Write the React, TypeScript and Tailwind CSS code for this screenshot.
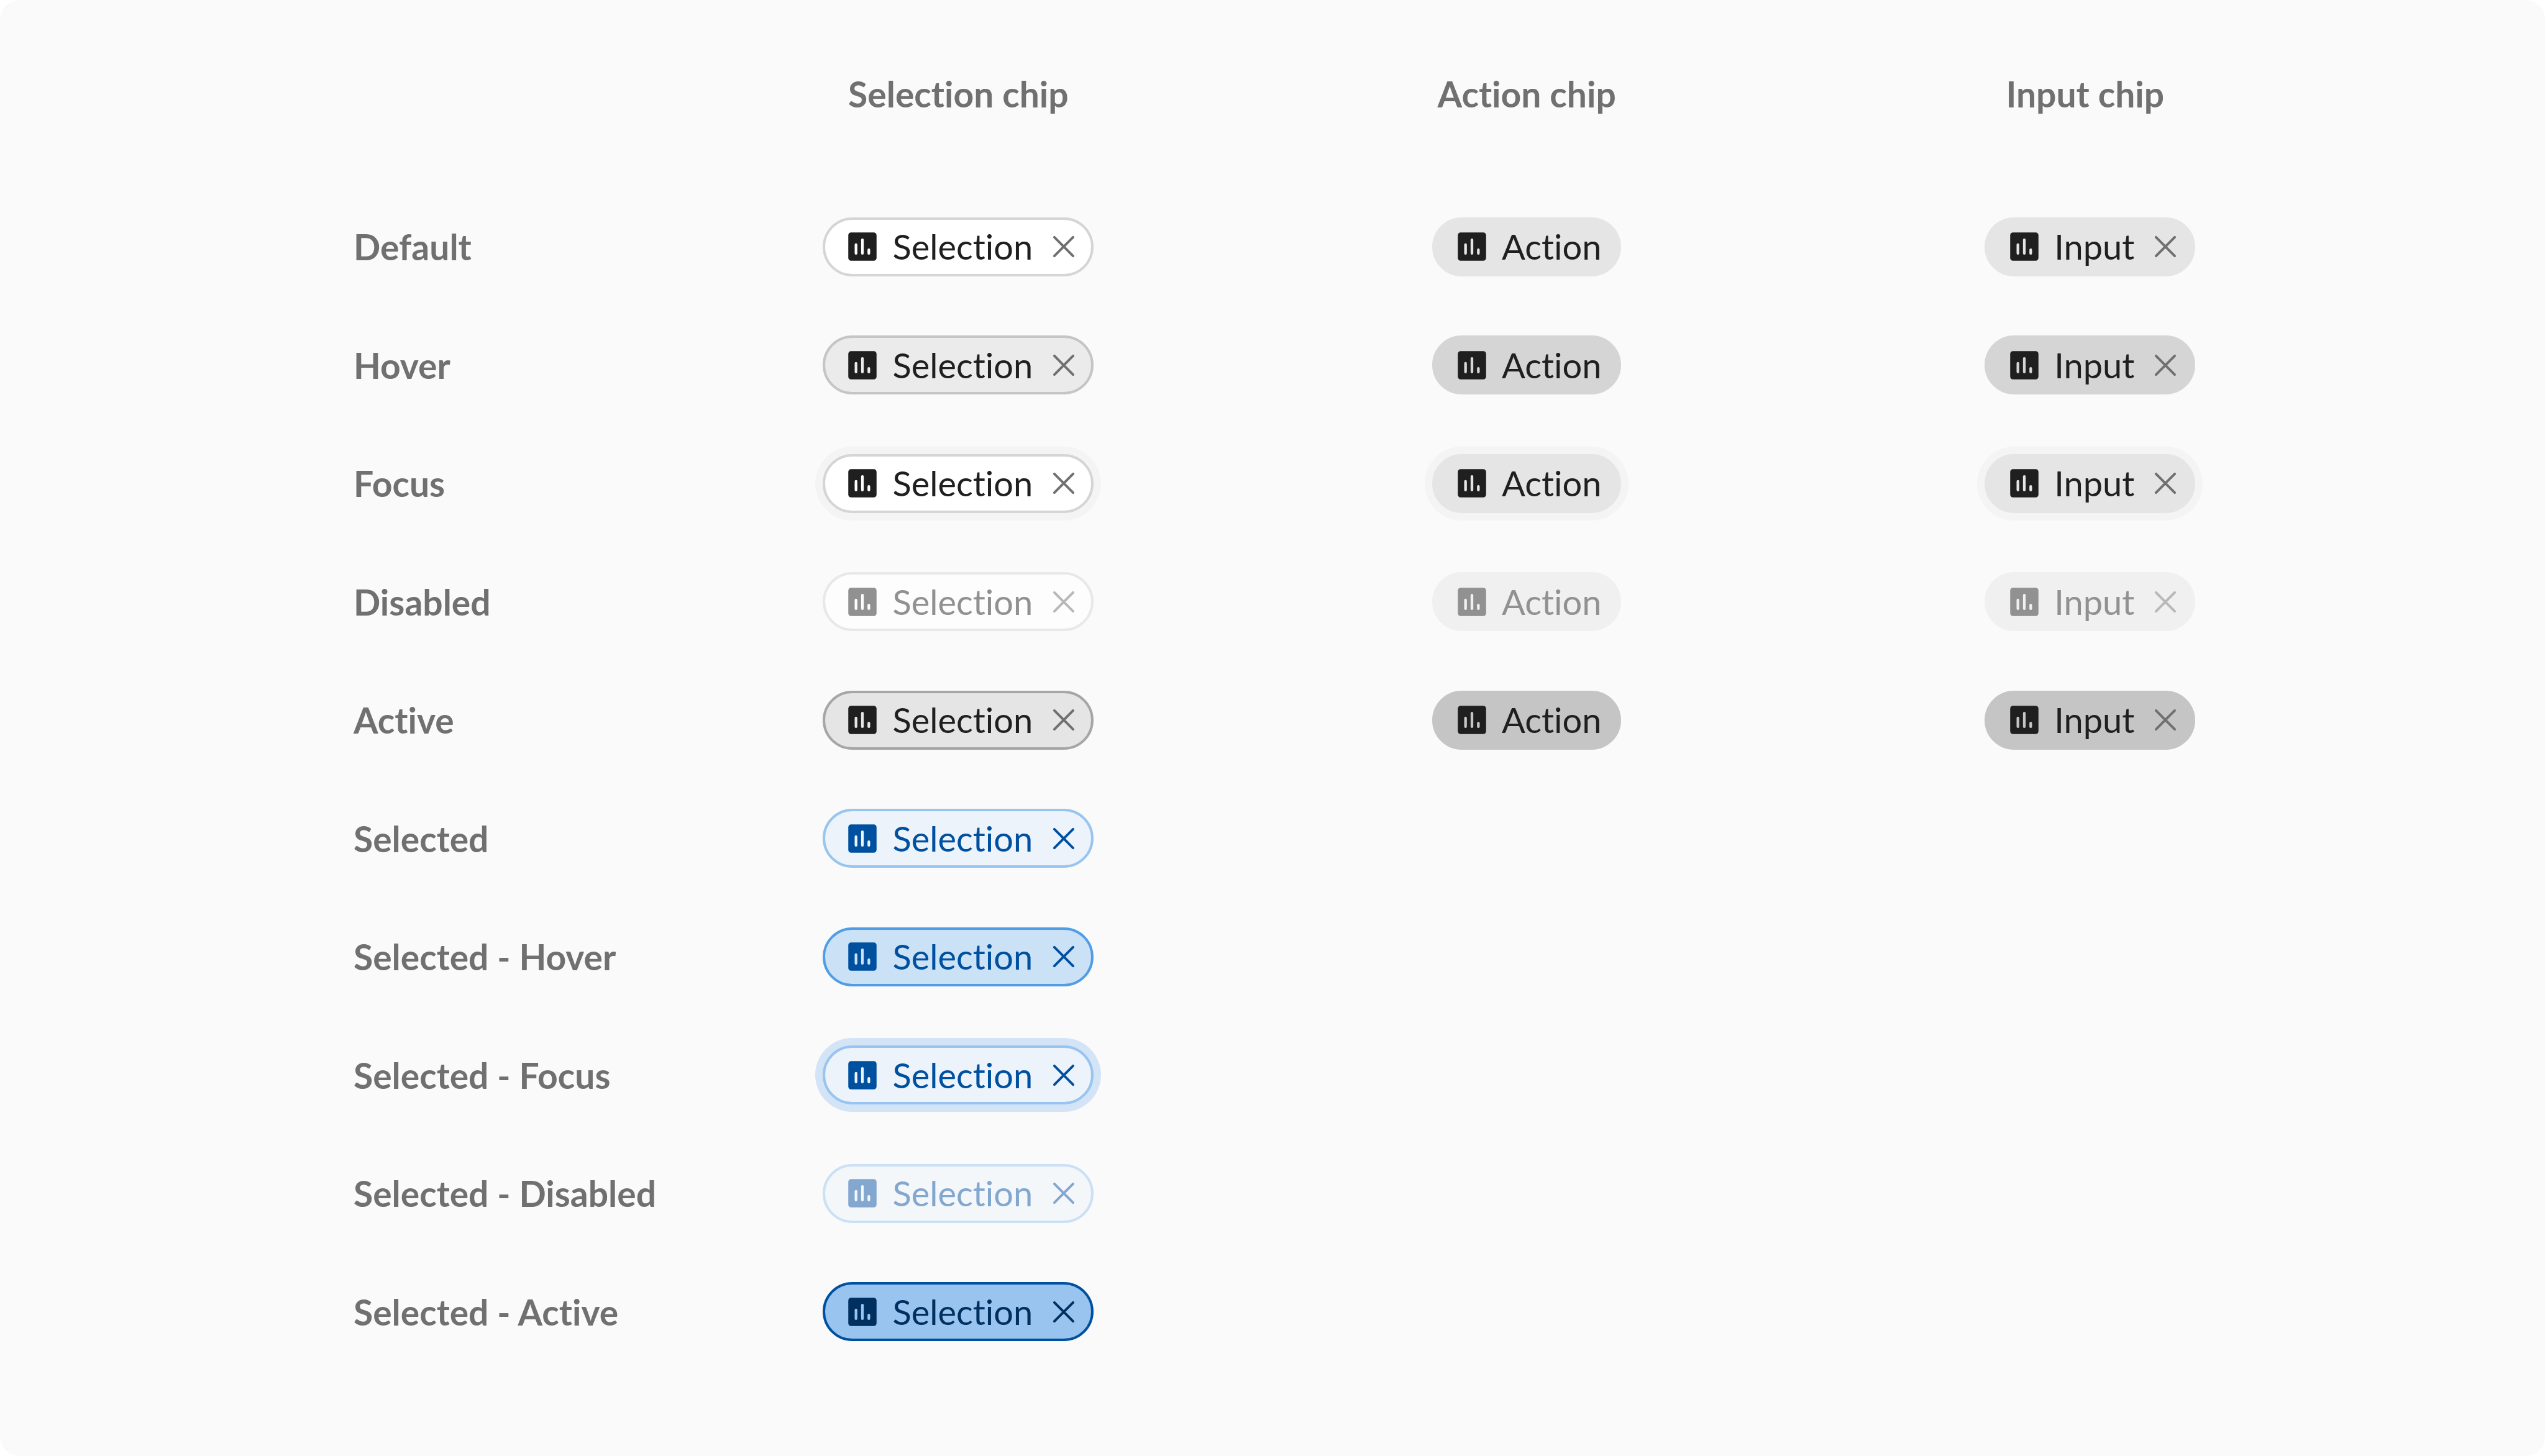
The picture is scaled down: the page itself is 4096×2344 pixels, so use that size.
import React from "react";
import clsx from "clsx";

type Kind = "selection" | "action" | "input";

interface Tone {
  box: string;
  text: string;
  close?: string;
}

interface State {
  label: string;
  disabled?: boolean;
  pressed?: boolean;
  selection: Tone;
  action?: Tone;
  input?: Tone;
}

const INK = "text-[#1f1f1f]";
const GREY = "text-[#707070]";
const GREY_RING = "ring-12 ring-[#f4f4f4]";

const same = (tone: Tone) => ({ action: tone, input: tone });

const states: State[] = [
  {
    label: "Default",
    selection: { box: "bg-white border-[#d5d5d5]", text: INK, close: GREY },
    ...same({ box: "bg-[#e5e5e5] border-[#e5e5e5]", text: INK, close: GREY }),
  },
  {
    label: "Hover",
    selection: { box: "bg-[#ebebeb] border-[#c5c5c5]", text: INK, close: GREY },
    ...same({ box: "bg-[#d5d5d5] border-[#d5d5d5]", text: INK, close: GREY }),
  },
  {
    label: "Focus",
    selection: { box: clsx("bg-white border-[#d5d5d5]", GREY_RING), text: INK, close: GREY },
    ...same({ box: clsx("bg-[#e5e5e5] border-[#e5e5e5]", GREY_RING), text: INK, close: GREY }),
  },
  {
    label: "Disabled",
    disabled: true,
    selection: { box: "bg-[#fdfdfd] border-[#e8e8e8]", text: "text-[#919191]", close: "text-[#b8b8b8]" },
    ...same({ box: "bg-[#f0f0f0] border-[#f0f0f0]", text: "text-[#919191]", close: "text-[#b8b8b8]" }),
  },
  {
    label: "Active",
    selection: { box: "bg-[#e5e5e5] border-[#a6a6a6]", text: INK, close: GREY },
    ...same({ box: "bg-[#c5c5c5] border-[#c5c5c5]", text: INK, close: GREY }),
  },
  {
    label: "Selected",
    pressed: true,
    selection: { box: "bg-[#ecf3fb] border-[#98c4ef]", text: "text-[#0050a0]" },
  },
  {
    label: "Selected - Hover",
    pressed: true,
    selection: { box: "bg-[#cbe1f5] border-[#509de6]", text: "text-[#0050a0]" },
  },
  {
    label: "Selected - Focus",
    pressed: true,
    selection: { box: "bg-[#ecf3fb] border-[#98c4ef] ring-12 ring-[#d4e4f7]", text: "text-[#0050a0]" },
  },
  {
    label: "Selected - Disabled",
    pressed: true,
    disabled: true,
    selection: { box: "bg-[#f4f7fa] border-[#cae1f5]", text: "text-[#83a7ce]" },
  },
  {
    label: "Selected - Active",
    pressed: true,
    selection: { box: "bg-[#98c4ef] border-[#0050a0]", text: "text-[#003060]" },
  },
];

/* Rounded square with three bars cut out, so the chip's fill shows through. */
function ChartIcon() {
  return (
    <svg viewBox="0 0 16 16" className="size-14 shrink-0" fill="currentColor" aria-hidden="true">
      <path
        fillRule="evenodd"
        d="M2.8 1.5h10.4a1.3 1.3 0 0 1 1.3 1.3v10.4a1.3 1.3 0 0 1-1.3 1.3H2.8a1.3 1.3 0 0 1-1.3-1.3V2.8a1.3 1.3 0 0 1 1.3-1.3zM5.05 6.5a.62.62 0 0 0-.62.62v3.96a.62.62 0 0 0 1.24 0V7.12a.62.62 0 0 0-.62-.62zM8 4.25a.62.62 0 0 0-.62.62v6.21a.62.62 0 0 0 1.24 0V4.87A.62.62 0 0 0 8 4.25zM10.95 8.85a.62.62 0 0 0-.62.62v1.61a.62.62 0 0 0 1.24 0V9.47a.62.62 0 0 0-.62-.62z"
      />
    </svg>
  );
}

function CloseIcon() {
  return (
    <svg viewBox="0 0 16 16" className="size-14 shrink-0" stroke="currentColor" strokeWidth="1.15" strokeLinecap="round" aria-hidden="true">
      <path d="M3.7 3.7l8.6 8.6M12.3 3.7l-8.6 8.6" />
    </svg>
  );
}

const names: Record<Kind, string> = { selection: "Selection", action: "Action", input: "Input" };

function Chip({ kind, tone, state }: { kind: Kind; tone: Tone; state: State }) {
  const closable = kind !== "action";
  return (
    <div
      className={clsx(
        "inline-flex h-[95px] items-center gap-[22px] rounded-full border-4 pl-8 align-middle",
        closable ? "pr-4" : "pr-7",
        tone.box,
        tone.text,
      )}
    >
      <button
        type="button"
        disabled={state.disabled}
        aria-pressed={kind === "selection" ? !!state.pressed : undefined}
        className="flex items-center gap-5 whitespace-nowrap text-[56px] leading-[76px]"
      >
        <ChartIcon />
        <span>{names[kind]}</span>
      </button>
      {closable && (
        <button type="button" disabled={state.disabled} aria-label={`Remove ${names[kind]}`} className={clsx("flex", tone.close)}>
          <CloseIcon />
        </button>
      )}
    </div>
  );
}

const kinds: Kind[] = ["selection", "action", "input"];

export default function App() {
  return (
    <main className="min-h-screen rounded-[32px] bg-[#fafafa] pr-[283px] pb-[137px] pl-[569px] font-['Lato',sans-serif] [font-variant-ligatures:none]">
      <table className="h-[calc(100vh-137px)] w-full table-fixed border-collapse text-[57px] leading-[76px] text-[#707070]">
        <colgroup>
          <col className="w-[516px]" />
          <col className="w-[28.2%]" />
          <col className="w-[28.2%]" />
          <col />
        </colgroup>
        <thead>
          <tr className="h-[302px]">
            <td />
            <th scope="col" className="font-bold">Selection chip</th>
            <th scope="col" className="font-bold">Action chip</th>
            <th scope="col" className="pr-4 font-bold">Input chip</th>
          </tr>
        </thead>
        <tbody>
          {states.map((state) => (
            <tr key={state.label}>
              <th scope="row" className="text-left font-bold whitespace-nowrap">{state.label}</th>
              {kinds.map((kind) => {
                const tone = state[kind];
                return (
                  <td key={kind} className="text-center">
                    {tone && <Chip kind={kind} tone={tone} state={state} />}
                  </td>
                );
              })}
            </tr>
          ))}
        </tbody>
      </table>
    </main>
  );
}
